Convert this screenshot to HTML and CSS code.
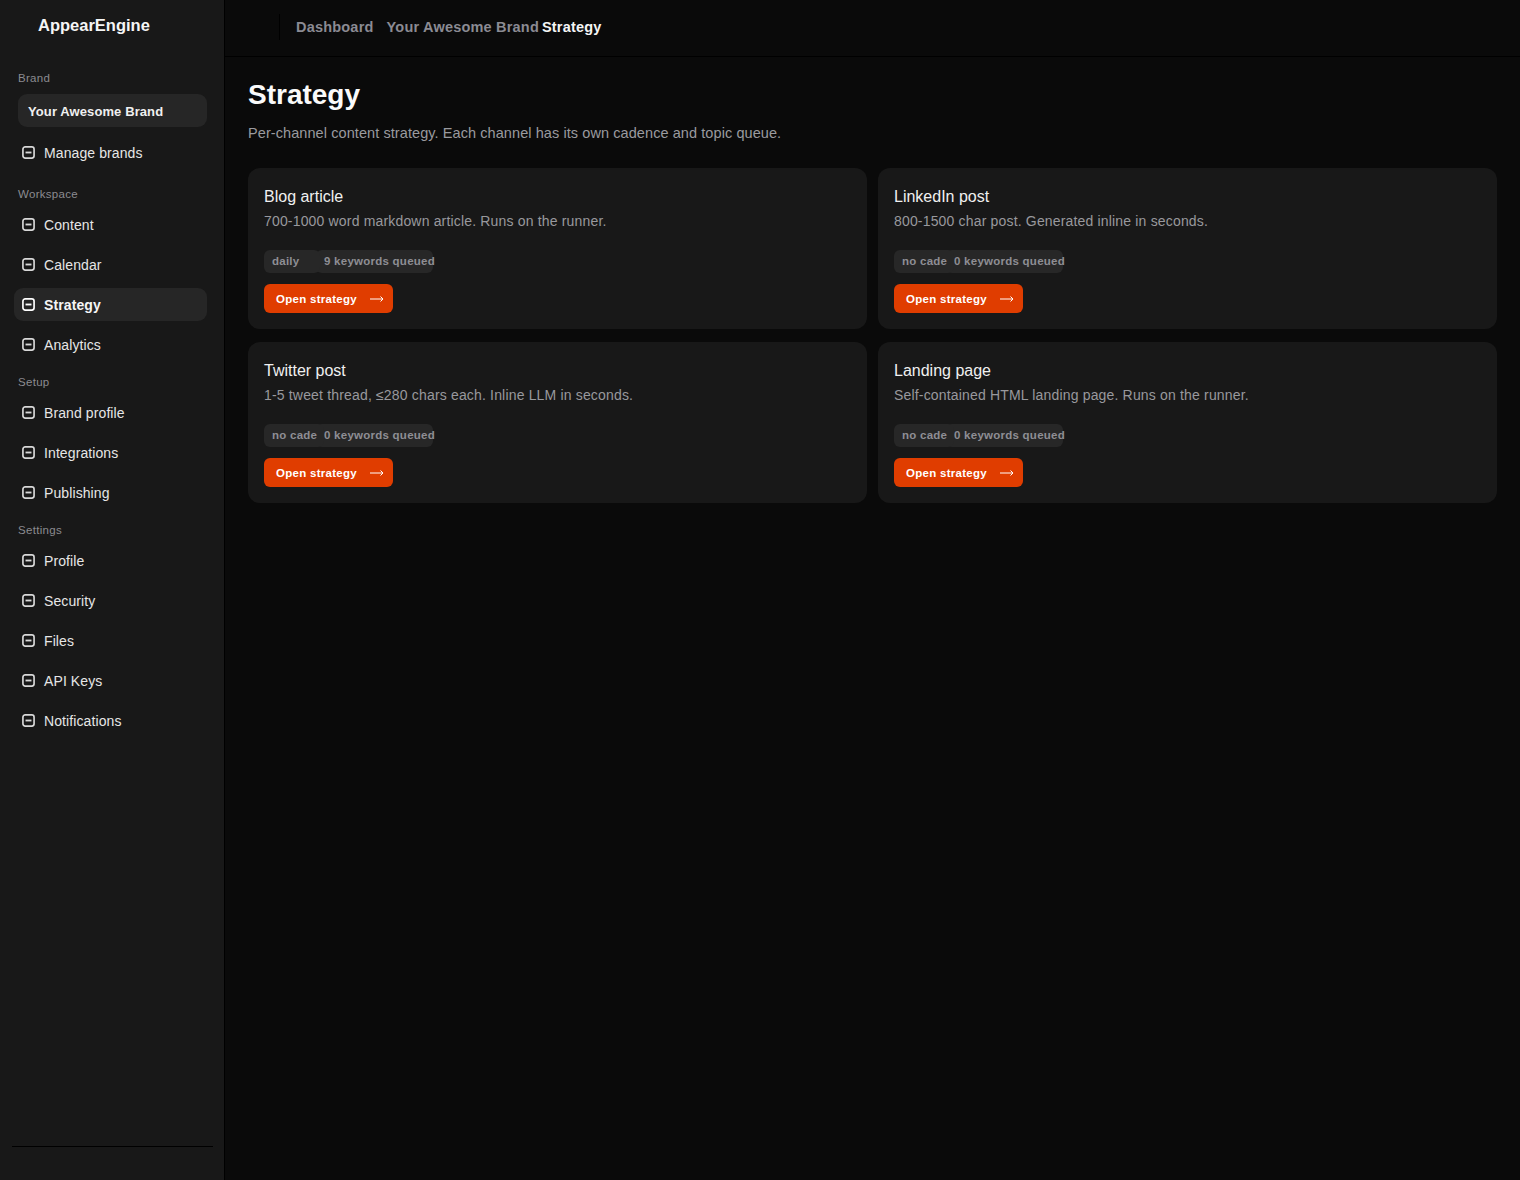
FILE: index.html
```html
<!DOCTYPE html>
<html lang="en">
<head>
    <meta charset="UTF-8">
    <meta name="viewport" content="width=device-width, initial-scale=1.0">
    <title>Strategy - AppearEngine</title>
    <link rel="stylesheet" href="styles.css">
</head>
<body>
    <svg class="icon-defs" width="0" height="0">
        <symbol id="icon-box" viewBox="0 0 14 14">
            <rect x="1" y="1" width="12" height="12" rx="2.500" fill="none" stroke="currentColor" stroke-width="1.800"/>
            <path d="M3.800 7h6.400" fill="none" stroke="currentColor" stroke-width="2"/>
        </symbol>
        <symbol id="icon-arrow" viewBox="0 0 14 8">
            <path d="M0 4h13M10.500 1.500L13 4l-2.500 2.500" fill="none" stroke="currentColor" stroke-width="1"/>
        </symbol>
    </svg>

    <div class="app">
        <aside class="sidebar">
            <div class="logo">AppearEngine</div>

            <div class="nav-label nav-label-first">Brand</div>
            <div class="brand-select">Your Awesome Brand</div>
            <a class="nav-item nav-item-manage"><svg class="nav-icon"><use href="#icon-box"/></svg>Manage brands</a>

            <div class="nav-label">Workspace</div>
            <a class="nav-item"><svg class="nav-icon"><use href="#icon-box"/></svg>Content</a>
            <a class="nav-item"><svg class="nav-icon"><use href="#icon-box"/></svg>Calendar</a>
            <a class="nav-item active"><svg class="nav-icon"><use href="#icon-box"/></svg>Strategy</a>
            <a class="nav-item"><svg class="nav-icon"><use href="#icon-box"/></svg>Analytics</a>

            <div class="nav-label">Setup</div>
            <a class="nav-item"><svg class="nav-icon"><use href="#icon-box"/></svg>Brand profile</a>
            <a class="nav-item"><svg class="nav-icon"><use href="#icon-box"/></svg>Integrations</a>
            <a class="nav-item"><svg class="nav-icon"><use href="#icon-box"/></svg>Publishing</a>

            <div class="nav-label">Settings</div>
            <a class="nav-item"><svg class="nav-icon"><use href="#icon-box"/></svg>Profile</a>
            <a class="nav-item"><svg class="nav-icon"><use href="#icon-box"/></svg>Security</a>
            <a class="nav-item"><svg class="nav-icon"><use href="#icon-box"/></svg>Files</a>
            <a class="nav-item"><svg class="nav-icon"><use href="#icon-box"/></svg>API Keys</a>
            <a class="nav-item"><svg class="nav-icon"><use href="#icon-box"/></svg>Notifications</a>

            <div class="sidebar-foot"></div>
        </aside>

        <div class="main">
            <header class="topbar">
                <span class="topbar-divider"></span>
                <nav class="crumbs">
                    <span class="crumb">Dashboard</span>
                    <span class="crumb">Your Awesome Brand</span>
                    <span class="crumb current">Strategy</span>
                </nav>
            </header>

            <section class="content">
                <h1>Strategy</h1>
                <p class="subtitle">Per-channel content strategy. Each channel has its own cadence and topic queue.</p>

                <div class="cards">
                    <div class="card">
                        <h3>Blog article</h3>
                        <p>700-1000 word markdown article. Runs on the runner.</p>
                        <div class="chips">
                            <span class="chip chip-cadence">daily</span>
                            <span class="chip chip-queue">9 keywords queued</span>
                        </div>
                        <a class="btn">Open strategy <svg class="btn-arrow"><use href="#icon-arrow"/></svg></a>
                    </div>
                    <div class="card">
                        <h3>LinkedIn post</h3>
                        <p>800-1500 char post. Generated inline in seconds.</p>
                        <div class="chips">
                            <span class="chip chip-cadence chip-unset">no cade</span>
                            <span class="chip chip-queue">0 keywords queued</span>
                        </div>
                        <a class="btn">Open strategy <svg class="btn-arrow"><use href="#icon-arrow"/></svg></a>
                    </div>
                    <div class="card">
                        <h3>Twitter post</h3>
                        <p>1-5 tweet thread, ≤280 chars each. Inline LLM in seconds.</p>
                        <div class="chips">
                            <span class="chip chip-cadence chip-unset">no cade</span>
                            <span class="chip chip-queue">0 keywords queued</span>
                        </div>
                        <a class="btn">Open strategy <svg class="btn-arrow"><use href="#icon-arrow"/></svg></a>
                    </div>
                    <div class="card">
                        <h3>Landing page</h3>
                        <p>Self-contained HTML landing page. Runs on the runner.</p>
                        <div class="chips">
                            <span class="chip chip-cadence chip-unset">no cade</span>
                            <span class="chip chip-queue">0 keywords queued</span>
                        </div>
                        <a class="btn">Open strategy <svg class="btn-arrow"><use href="#icon-arrow"/></svg></a>
                    </div>
                </div>
            </section>
        </div>
    </div>
</body>
</html>
```

FILE: styles.css
```css
* {
    box-sizing: border-box;
}
html, body {
    height: 100%;
}
body {
    margin: 0;
    background: #0a0a0a;
    color: #fafafa;
    font-family: "Liberation Sans", Arial, sans-serif;
    overflow: hidden;
}
.icon-defs {
    position: absolute;
}
.app {
    display: flex;
    height: 1180px;
}

/* sidebar */
.sidebar {
    width: 225px;
    flex-shrink: 0;
    display: flex;
    flex-direction: column;
    padding: 0 17px 0 14px;
    background: #181818;
    border-right: 1px solid #000;
}
.logo {
    height: 50px;
    padding: 15px 0 0 24px;
    font-size: 16.500px;
    line-height: 20px;
    font-weight: 700;
    color: #f5f5f5;
}
.nav-label {
    height: 16px;
    margin: 6px 0 6px 4px;
    font-size: 11.500px;
    line-height: 16px;
    letter-spacing: 0.3px;
    color: #8b8b90;
}
.nav-label-first {
    margin-top: 20px;
    margin-bottom: 8px;
}
.brand-select {
    height: 33px;
    margin: 0 0 0 4px;
    padding-left: 10px;
    border-radius: 9px;
    background: #262626;
    font-size: 13px;
    line-height: 35px;
    font-weight: 700;
    letter-spacing: 0.1px;
    color: #f0f0f0;
}
.nav-item {
    height: 33px;
    margin-bottom: 7px;
    display: flex;
    align-items: center;
    gap: 9px;
    padding-left: 8px;
    border-radius: 9px;
    font-size: 14px;
    letter-spacing: 0.1px;
    color: #e6e6e6;
}
.nav-item-manage {
    margin-top: 9px;
    margin-bottom: 11px;
}
.nav-item.active {
    background: #262626;
    color: #f5f5f5;
    font-weight: 700;
}
.nav-icon {
    width: 13px;
    height: 13px;
    flex-shrink: 0;
    color: #d8d8d8;
}
.nav-item.active .nav-icon {
    color: #fff;
}
.sidebar-foot {
    margin: auto -6px 33px -2px;
    border-top: 1px solid #000;
}

/* main */
.main {
    flex: 1;
    min-width: 0;
}
.topbar {
    height: 57px;
    display: flex;
    align-items: center;
    padding: 0 0 2px 54px;
    border-bottom: 1px solid #000;
}
.topbar-divider {
    width: 1px;
    height: 26px;
    margin-right: 16px;
    background: #000;
}
.crumbs {
    display: flex;
    gap: 13px;
    font-size: 14.500px;
    font-weight: 700;
    letter-spacing: 0.2px;
    color: #8b8b93;
}
.crumb.current {
    margin-left: -10px;
    color: #f5f5f5;
}
.content {
    padding: 22px 23px 0;
}
h1 {
    margin: 0;
    font-size: 28px;
    line-height: 32px;
    font-weight: 700;
    color: #fafafa;
}
.subtitle {
    margin: 12px 0 25px;
    font-size: 14.500px;
    line-height: 20px;
    letter-spacing: 0.08px;
    color: #9a9a9f;
}
.cards {
    display: grid;
    grid-template-columns: 1fr 1fr;
    column-gap: 11px;
    row-gap: 13px;
}
.card {
    height: 161px;
    padding: 18px 16px 16px;
    border-radius: 12px;
    background: #181818;
}
.card h3 {
    margin: 0;
    font-size: 16px;
    line-height: 21px;
    font-weight: 400;
    color: #f0f0f0;
}
.card p {
    margin: 4px 0 0;
    font-size: 14px;
    line-height: 20px;
    letter-spacing: 0.17px;
    color: #98989d;
}
.chips {
    display: flex;
    margin-top: 19px;
}
.chip {
    height: 23px;
    flex-shrink: 0;
    padding-left: 8px;
    border-radius: 6px;
    background: #272727;
    font-size: 11.500px;
    line-height: 23px;
    font-weight: 700;
    letter-spacing: 0.25px;
    color: #8e8e94;
    white-space: nowrap;
}
.chip-cadence {
    position: relative;
    z-index: 1;
    width: 56px;
    margin-right: -4px;
}
.chip-unset {
    width: 60px;
    margin-right: -8px;
}
.chip-queue {
    width: 117px;
}
.btn {
    width: 129px;
    height: 29px;
    margin-top: 11px;
    display: flex;
    align-items: center;
    padding-left: 12px;
    border-radius: 6px;
    background: #e03d00;
    font-size: 11.500px;
    font-weight: 700;
    letter-spacing: 0.28px;
    color: #fff;
}
.btn-arrow {
    width: 14px;
    height: 8px;
    margin-left: auto;
    margin-right: 9px;
}
```
